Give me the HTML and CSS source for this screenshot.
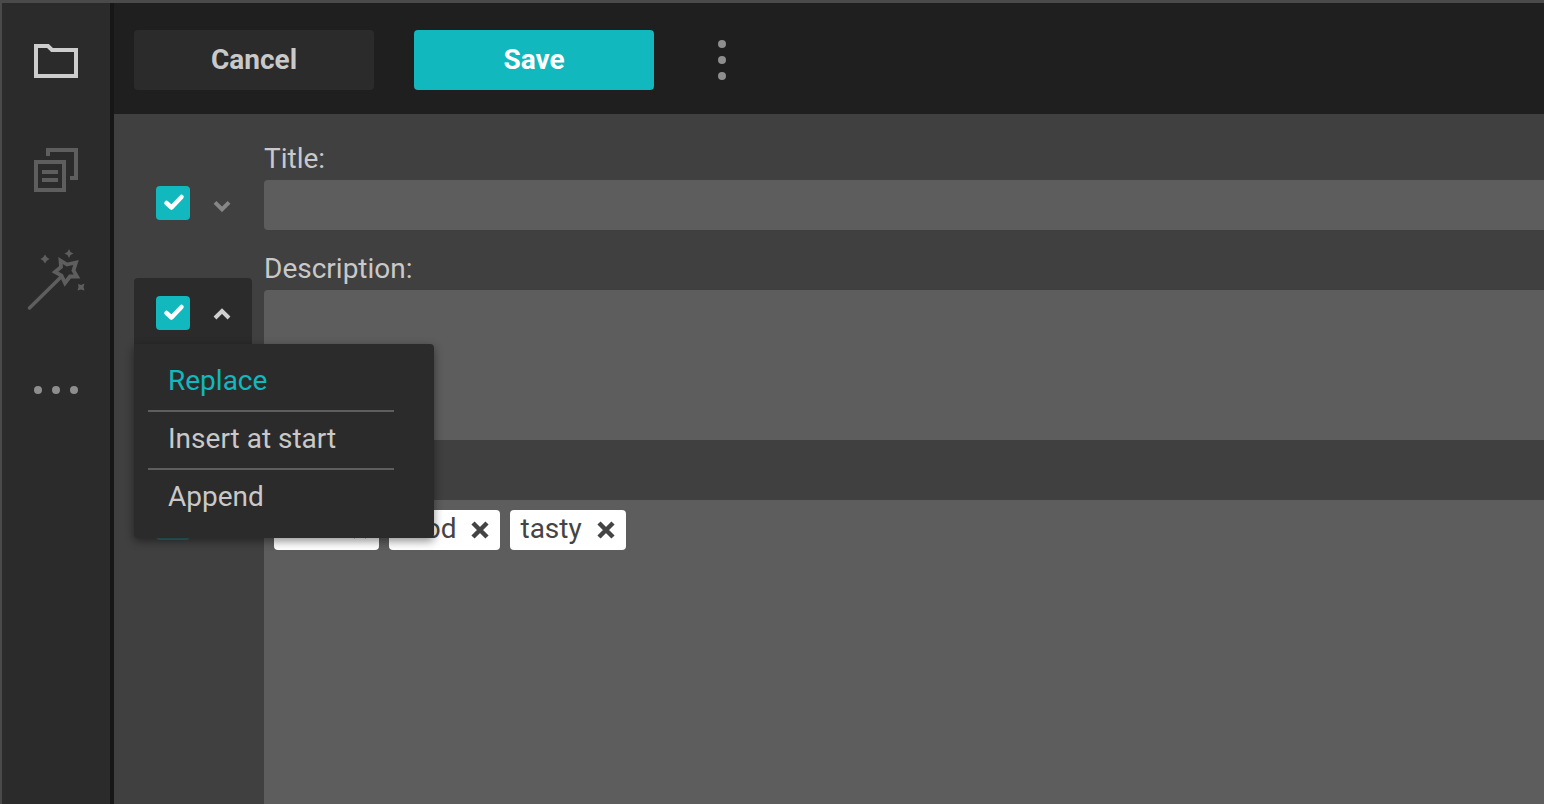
FILE: index.html
```html
<!DOCTYPE html>
<html lang="en">
<head>
<meta charset="utf-8">
<title>Edit metadata</title>
<link rel="stylesheet" href="styles.css">
</head>
<body>
<div class="app">
  <nav class="rail">
    <button class="rail-btn"><svg class="rail-icon" viewBox="24 29 64 64"><path class="stroke-light" d="M36 46H48L52 50H76V76H36Z"/></svg></button>
    <button class="rail-btn"><svg class="rail-icon" viewBox="24 139 64 64"><path class="stroke-dim" d="M48 156V150H76V178H70"/><rect class="stroke-dim" x="36" y="162" width="28" height="28"/><path class="stroke-dim" d="M42 172H58M42 180H58"/></svg></button>
    <button class="rail-btn"><svg class="rail-icon" viewBox="24 249 64 64"><path class="stroke-dim round thin" d="M29.500 308L61 277"/><path class="stroke-dim round thick" d="M60.500 260.500L67 264.500L76 262.500L73.500 270.500L77 276.500L70 276.500L65 283L61.500 275.500L55 272L61 267Z"/><path class="fill-dim" d="M45 254.500L46.800 257.200L49.500 259L46.800 260.800L45 263.500L43.200 260.800L40.500 259L43.200 257.200ZM69 249L70.500 252L73.500 253.500L70.500 255L69 258L67.500 255L64.500 253.500L67.500 252ZM78 284L81 285L84.500 283.500L83.500 287L84.500 290.500L81 289.500L77.500 290.500L78.500 287Z"/></svg></button>
    <button class="rail-btn"><svg class="rail-icon" viewBox="24 359 64 64"><circle class="fill-dot" cx="38" cy="390" r="4"/><circle class="fill-dot" cx="56" cy="390" r="4"/><circle class="fill-dot" cx="74" cy="390" r="4"/></svg></button>
  </nav>
  <main class="main">
    <header class="toolbar">
      <button class="btn btn-cancel">Cancel</button>
      <button class="btn btn-save">Save</button>
      <button class="kebab"><svg class="kebab-icon" viewBox="0 0 8 40"><circle class="fill-dot" cx="4" cy="4" r="4"/><circle class="fill-dot" cx="4" cy="20" r="4"/><circle class="fill-dot" cx="4" cy="36" r="4"/></svg></button>
    </header>
    <form class="form">
      <div class="row">
        <div class="control">
          <span class="check"><svg class="check-icon" viewBox="0 0 34 34"><path d="M10.500 17L15.500 21.500L25.500 11"/></svg></span>
          <svg class="chevron chevron-dim" viewBox="0 0 20 12"><path d="M3 2.300L10 9.300L17 2.300"/></svg>
        </div>
        <div class="field">
          <label class="label">Title:</label>
          <div class="input input-title"></div>
        </div>
      </div>
      <div class="row">
        <div class="control control-open">
          <span class="check"><svg class="check-icon" viewBox="0 0 34 34"><path d="M10.500 17L15.500 21.500L25.500 11"/></svg></span>
          <svg class="chevron chevron-light" viewBox="0 0 20 12"><path d="M3 10L10 3L17 10"/></svg>
          <ul class="menu">
            <li class="menu-item menu-item-active">Replace</li>
            <li class="menu-item">Insert at start</li>
            <li class="menu-item">Append</li>
          </ul>
        </div>
        <div class="field">
          <label class="label">Description:</label>
          <div class="input input-desc"></div>
        </div>
      </div>
      <div class="row row-grow">
        <div class="control">
          <span class="check check-hidden"></span>
        </div>
        <div class="field">
          <label class="label">Keywords:</label>
          <div class="input input-tags">
            <span class="tag tag-first">nice <svg class="tag-x" viewBox="0 0 20 20"><path d="M3 3L17 17M17 3L3 17"/></svg></span>
            <span class="tag">food <svg class="tag-x" viewBox="0 0 20 20"><path d="M3 3L17 17M17 3L3 17"/></svg></span>
            <span class="tag">tasty <svg class="tag-x" viewBox="0 0 20 20"><path d="M3 3L17 17M17 3L3 17"/></svg></span>
          </div>
        </div>
      </div>
    </form>
  </main>
</div>
</body>
</html>
```
FILE: styles.css
```css
* { box-sizing: border-box; }
html, body { height: 100%; margin: 0; }
body {
  background: #4a4a4a;
  font-family: Roboto, "Liberation Sans", sans-serif;
  overflow: hidden;
}
button { font-family: inherit; border: 0; padding: 0; background: none; }

.app {
  display: flex;
  height: 801px;
  margin: 3px 0 0 2px;
}

.rail {
  width: 108px;
  flex: none;
  background: #2b2b2b;
  display: flex;
  flex-direction: column;
  padding-top: 3px;
}
.rail-btn {
  height: 110px;
  display: flex;
  align-items: center;
  justify-content: center;
  flex: none;
}
.rail-icon { width: 64px; height: 64px; display: block; }
.stroke-light, .stroke-dim { fill: none; stroke-width: 4; }
.stroke-light { stroke: #cdcdcd; }
.stroke-dim { stroke: #5e5e5e; }
.round { stroke-linecap: round; stroke-linejoin: round; }
.thin { stroke-width: 3.500; }
.thick { stroke-width: 3.800; stroke-linejoin: miter; }
.fill-dim { fill: #5e5e5e; }
.fill-dot { fill: #8e8e8e; }

.main {
  flex: 1;
  min-width: 0;
  display: flex;
  flex-direction: column;
  border-left: 4px solid #171717;
}

.toolbar {
  height: 111px;
  flex: none;
  background: #1f1f1f;
  display: flex;
  align-items: center;
  padding: 3px 20px 0;
}
.btn {
  width: 240px;
  height: 60px;
  padding-bottom: 2px;
  border-radius: 4px;
  font-size: 28px;
  font-weight: 700;
}
.btn-cancel { background: #2b2b2b; color: #c9c9c9; }
.btn-save { background: #11b8bd; color: #fff; margin-left: 40px; }
.kebab { margin-left: 64px; display: flex; }
.kebab-icon { width: 8px; height: 40px; display: block; }

.form {
  flex: 1;
  min-height: 0;
  background: #404040;
  display: flex;
  flex-direction: column;
  gap: 26px;
  padding: 32px 0 0 20px;
  overflow: hidden;
}
.row { display: flex; flex: none; }
.row-grow { flex: 1; min-height: 0; }

.control {
  width: 118px;
  height: 66px;
  flex: none;
  margin: 22px 12px -22px 0;
  padding: 18px 0 14px 22px;
  display: flex;
  align-items: flex-start;
  border-radius: 4px 4px 0 0;
  position: relative;
}
.control-open { background: #2b2b2b; }

.check {
  width: 34px;
  height: 34px;
  background: #11b8bd;
  border-radius: 4px;
  display: block;
  flex: none;
}
.check-hidden { opacity: .35; }
.check-icon { display: block; width: 34px; height: 34px; }
.check-icon path {
  fill: none;
  stroke: #fff;
  stroke-width: 4.500;
  stroke-linecap: round;
  stroke-linejoin: round;
}
.chevron {
  width: 20px;
  height: 12px;
  margin: 12px 0 0 22px;
  flex: none;
}
.chevron path { fill: none; stroke-width: 4; }
.chevron-dim path { stroke: #868686; }
.chevron-light path { stroke: #d0d0d0; }
.chevron-dim { margin-top: 14px; }

.menu {
  position: absolute;
  left: 0;
  top: 66px;
  z-index: 2;
  width: 300px;
  margin: 0;
  padding: 8px 40px 12px 14px;
  list-style: none;
  background: #2b2b2b;
  border-radius: 0 4px 4px 4px;
  box-shadow: 0 3px 10px rgba(0, 0, 0, .45);
}
.menu-item {
  height: 58px;
  padding-left: 20px;
  font-size: 28px;
  line-height: 54px;
  color: #c9c9c9;
  border-top: 2px solid #5e5e5e;
}
.menu-item:first-child { border-top: 0; line-height: 58px; }
.menu-item-active { color: #11b8bd; }

.field { flex: 1; min-width: 0; display: flex; flex-direction: column; }
.label {
  height: 34px;
  font-size: 28px;
  line-height: 26px;
  color: #c9c9c9;
  flex: none;
}
.input { background: #5d5d5d; border-radius: 4px 0 0 4px; }
.input-title { height: 50px; }
.input-desc { height: 150px; }
.input-tags {
  flex: 1;
  border-radius: 0;
  padding: 10px;
  display: flex;
  align-items: flex-start;
  gap: 10px;
}
.tag {
  height: 40px;
  padding: 0 10px 3px;
  display: flex;
  align-items: center;
  gap: 14px;
  background: #fff;
  border-radius: 4px;
  font-size: 28px;
  line-height: 36px;
  color: #444;
  white-space: nowrap;
}
.tag-first { width: 105px; }
.tag-x { width: 20px; height: 20px; flex: none; margin-top: 3px; }
.tag-x path { fill: none; stroke: #444; stroke-width: 4.500; }
```
